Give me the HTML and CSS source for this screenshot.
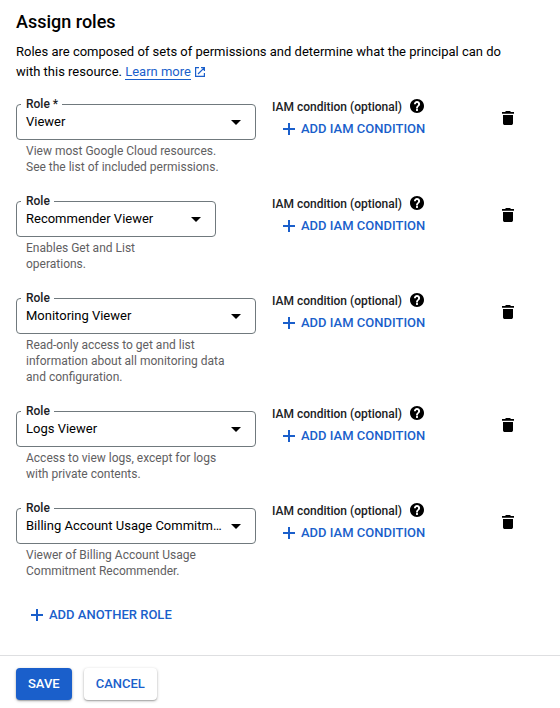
FILE: index.html
```html
<!DOCTYPE html>
<html lang="en">
<head>
<meta charset="utf-8">
<title>Assign roles</title>
<link rel="stylesheet" href="styles.css">
</head>
<body>
<svg class="defs" width="0" height="0">
  <symbol id="plus" viewBox="0 0 12 12"><path d="M5 0h2v5h5v2H7v5H5V7H0V5h5z"/></symbol>
  <symbol id="help" viewBox="2 2 20 20"><path d="M12 2C6.48 2 2 6.48 2 12s4.48 10 10 10 10-4.480 10-10S17.520 2 12 2zm1.300 17h-2.600v-2.600h2.600zm2.300-7.400-.9.920c-.8.800-1.300 1.480-1.300 2.880h-2.800v-.5c0-1.100.5-2.100 1.200-2.830l1.240-1.260c.36-.360.560-.860.560-1.410 0-1-.7-1.700-1.600-1.700s-1.600.7-1.600 1.700H7.600C7.600 6.700 9.600 4.800 12 4.800s4.400 1.900 4.400 4.200c0 1-.3 1.900-.8 2.600z"/></symbol>
  <symbol id="trash" viewBox="0 0 12 14"><path d="M4 0h4l1 1h3v1.700H0V1h3zM1 4h10v8.200c0 1-.8 1.800-1.800 1.800H2.800C1.800 14 1 13.200 1 12.200z"/></symbol>
  <symbol id="external" viewBox="0 0 10 10"><path d="M4 .6H.6v8.800h8.800V6M6 .6h3.400V4M9.200.8 3 7" fill="none" stroke="currentColor" stroke-width="1.200"/></symbol>
</svg>
<main class="panel">
  <h1 class="title">Assign roles</h1>
  <p class="intro">Roles are composed of sets of permissions and determine what the principal can do<br>with this resource. <a class="link" href="#">Learn more</a><svg class="external"><use href="#external"/></svg></p>

  <section class="role">
    <div class="field">
      <div class="select"><span class="label">Role *</span><span class="value">Viewer</span><i class="arrow"></i></div>
      <p class="hint">View most Google Cloud resources.<br>See the list of included permissions.</p>
    </div>
    <div class="condition">
      <div class="caption"><span class="text">IAM condition (optional)</span><svg class="help"><use href="#help"/></svg></div>
      <a class="add"><svg class="plus"><use href="#plus"/></svg>ADD IAM CONDITION</a>
    </div>
    <svg class="trash"><use href="#trash"/></svg>
  </section>

  <section class="role">
    <div class="field">
      <div class="select narrow"><span class="label">Role</span><span class="value">Recommender Viewer</span><i class="arrow"></i></div>
      <p class="hint">Enables Get and List<br>operations.</p>
    </div>
    <div class="condition">
      <div class="caption"><span class="text">IAM condition (optional)</span><svg class="help"><use href="#help"/></svg></div>
      <a class="add"><svg class="plus"><use href="#plus"/></svg>ADD IAM CONDITION</a>
    </div>
    <svg class="trash"><use href="#trash"/></svg>
  </section>

  <section class="role">
    <div class="field">
      <div class="select"><span class="label">Role</span><span class="value">Monitoring Viewer</span><i class="arrow"></i></div>
      <p class="hint">Read-only access to get and list<br>information about all monitoring data<br>and configuration.</p>
    </div>
    <div class="condition">
      <div class="caption"><span class="text">IAM condition (optional)</span><svg class="help"><use href="#help"/></svg></div>
      <a class="add"><svg class="plus"><use href="#plus"/></svg>ADD IAM CONDITION</a>
    </div>
    <svg class="trash"><use href="#trash"/></svg>
  </section>

  <section class="role">
    <div class="field">
      <div class="select"><span class="label">Role</span><span class="value">Logs Viewer</span><i class="arrow"></i></div>
      <p class="hint">Access to view logs, except for logs<br>with private contents.</p>
    </div>
    <div class="condition">
      <div class="caption"><span class="text">IAM condition (optional)</span><svg class="help"><use href="#help"/></svg></div>
      <a class="add"><svg class="plus"><use href="#plus"/></svg>ADD IAM CONDITION</a>
    </div>
    <svg class="trash"><use href="#trash"/></svg>
  </section>

  <section class="role">
    <div class="field">
      <div class="select"><span class="label">Role</span><span class="value">Billing Account Usage Commitm…</span><i class="arrow"></i></div>
      <p class="hint">Viewer of Billing Account Usage<br>Commitment Recommender.</p>
    </div>
    <div class="condition">
      <div class="caption"><span class="text">IAM condition (optional)</span><svg class="help"><use href="#help"/></svg></div>
      <a class="add"><svg class="plus"><use href="#plus"/></svg>ADD IAM CONDITION</a>
    </div>
    <svg class="trash"><use href="#trash"/></svg>
  </section>

  <a class="add another"><svg class="plus"><use href="#plus"/></svg>ADD ANOTHER ROLE</a>
</main>
<footer class="actions">
  <button class="button primary">SAVE</button>
  <button class="button">CANCEL</button>
</footer>
</body>
</html>
```
FILE: styles.css
```css
* { box-sizing: border-box; }
body {
  margin: 0;
  background: #fff;
  color: #000;
  font: 13px/20px Roboto, sans-serif;
}
.defs { position: absolute; }
svg { fill: currentColor; flex: none; }
.panel { height: 655px; padding: 10px 16px 0; }
.title { margin: 0; font-size: 18px; font-weight: 500; line-height: 24px; }
.intro { margin: 8px 0 22px; white-space: nowrap; }
.link { color: #1a5fcb; text-decoration: none; border-bottom: 1px solid; }
.external { width: 10px; height: 10px; margin-left: 4px; vertical-align: -1px; color: #1a5fcb; }
.role { display: flex; margin-bottom: 26px; }
.field { width: 240px; }
.select {
  position: relative;
  display: flex;
  align-items: center;
  justify-content: space-between;
  height: 36px;
  padding: 0 14px 0 9px;
  border: 1px solid #70797d;
  border-radius: 4px;
}
.narrow { width: 200px; }
.label {
  position: absolute;
  top: -9px;
  left: 4px;
  padding: 0 4px 0 5px;
  background: #fff;
  font-size: 12px;
  font-weight: 500;
  line-height: 16px;
  color: #202124;
}
.value { white-space: nowrap; }
.arrow { border: 5px solid transparent; border-top-color: #000; border-bottom: 0; }
.hint { margin: 3px 0 0 10px; font-size: 12px; line-height: 16px; color: #5f6062; white-space: nowrap; }
.condition { width: 230px; margin-left: 16px; margin-top: -8px; }
.caption { display: flex; align-items: center; height: 20px; font-size: 12px; font-weight: 500; color: #202124; }
.text { padding-top: 2px; line-height: 18px; }
.help { width: 14px; height: 14px; margin-left: 8px; color: #000; }
.add { display: flex; align-items: center; gap: 6px; height: 20px; margin: 3px 0 0 11px; font-weight: 500; color: #1a5fcb; }
.plus { width: 12px; height: 12px; }
.trash { width: 12px; height: 14px; margin-top: 7px; }
.another { margin: 26px 0 0 15px; }
.actions { display: flex; gap: 12px; height: 53px; padding: 12px 16px; border-top: 1px solid #dedfe1; }
.button {
  height: 32px;
  padding: 0 12px;
  border: 0;
  border-radius: 4px;
  background: #fff;
  color: #1a5fcb;
  font: 500 13px/32px Roboto, sans-serif;
  box-shadow: 0 1px 3px rgba(0,0,0,.3), 0 1px 1px rgba(0,0,0,.15);
}
.primary { background: #1a5fcb; color: #fff; }
```
